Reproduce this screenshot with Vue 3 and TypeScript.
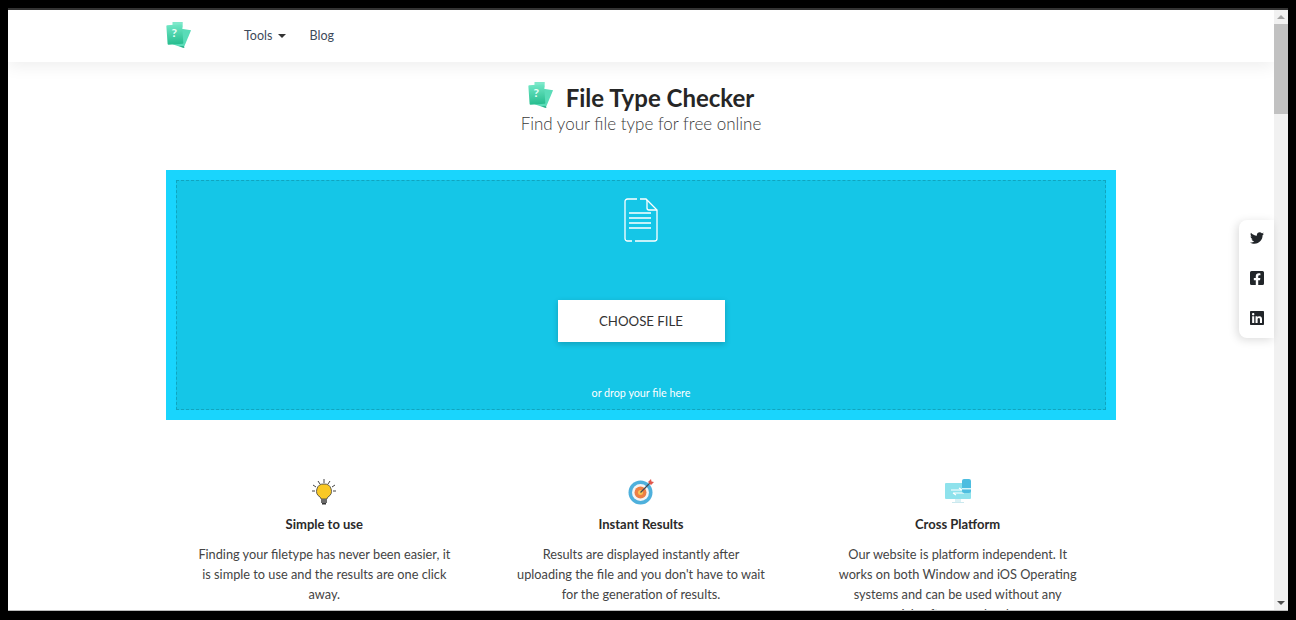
<script setup lang="ts">
const features = [
  {
    title: 'Simple to use',
    icon: 'bulb',
    text: 'Finding your filetype has never been easier, it is simple to use and the results are one click away.',
  },
  {
    title: 'Instant Results',
    icon: 'target',
    text: "Results are displayed instantly after uploading the file and you don't have to wait for the generation of results.",
  },
  {
    title: 'Cross Platform',
    icon: 'screen',
    text: 'Our website is platform independent. It works on both Window and iOS Operating systems and can be used without any special software or hardware.',
  },
]
</script>

<template>
  <div class="frame">
    <div class="viewport">
      <div class="page">
        <header class="navbar">
          <div class="container nav-inner">
            <svg class="logo" viewBox="0 0 26 28">
              <defs>
                <linearGradient id="cardGrad" x1="0" y1="0" x2="0" y2="1">
                  <stop offset="0" stop-color="#6fe6c4" />
                  <stop offset="1" stop-color="#27bd8f" />
                </linearGradient>
              </defs>
              <path d="M14 7 L26 9 L18 28 L6 24 Z" fill="#5adcb8" />
              <path d="M18 26 L19 28 L13 26 Z" fill="#24a57f" />
              <rect x="6" y="0" width="11" height="6" fill="#7fe8ca" />
              <rect x="0" y="3" width="17" height="21" rx="1" fill="url(#cardGrad)" transform="rotate(-4 8 13)" />
              <text x="5" y="16" class="logo-mark">?</text>
            </svg>
            <a class="nav-link tools">Tools <span class="caret" /></a>
            <a class="nav-link">Blog</a>
          </div>
        </header>

        <main class="container">
          <div class="title-row">
            <svg class="logo title-logo" viewBox="0 0 26 28">
              <path d="M14 7 L26 9 L18 28 L6 24 Z" fill="#5adcb8" />
              <path d="M18 26 L19 28 L13 26 Z" fill="#24a57f" />
              <rect x="6" y="0" width="11" height="6" fill="#7fe8ca" />
              <rect x="0" y="3" width="17" height="21" rx="1" fill="url(#cardGrad)" transform="rotate(-4 8 13)" />
              <text x="5" y="16" class="logo-mark">?</text>
            </svg>
            <h1>File Type Checker</h1>
          </div>
          <p class="subtitle">Find your file type for free online</p>

          <section class="dropzone">
            <div class="dropzone-inner">
              <svg class="file-icon" viewBox="0 0 34 44" fill="none" stroke="#fff" stroke-width="1.3">
                <path d="M13 1H3.500A2.500 2.500 0 0 0 1 3.500V40.500A2.500 2.500 0 0 0 3.500 43H8M11 43H30.500A2.500 2.500 0 0 0 33 40.500V12L22 1H16" />
                <path d="M23 2V10A2 2 0 0 0 25 12H33" />
                <path d="M5 15H27M5 20H27M5 25H27M5 30H27" />
              </svg>
              <button class="choose-btn">CHOOSE FILE</button>
              <span class="drop-hint">or drop your file here</span>
            </div>
          </section>

          <section class="features">
            <article v-for="f in features" :key="f.title" class="feature">
              <svg v-if="f.icon === 'bulb'" class="feature-icon" viewBox="0 0 26 26">
                <path d="M2 6l3 2M7 2l2 3M13 0v4M19 2l-2 3M24 6l-3 2M1 12h3M25 12h-3" stroke="#444" stroke-width="1" fill="none" />
                <path d="M13 5a7 7 0 0 0-4 13c.700.600 1 1.300 1 2h6c0-.700.300-1.400 1-2a7 7 0 0 0-4-13z" fill="#f9c825" stroke="#3d3d3d" stroke-width=".8" />
                <rect x="10" y="20" width="6" height="4" fill="#6b6b6b" />
                <rect x="11" y="24" width="4" height="1.500" fill="#333" />
              </svg>
              <svg v-else-if="f.icon === 'target'" class="feature-icon" viewBox="0 0 26 26">
                <circle cx="12.500" cy="13.500" r="12" fill="#4eb0dc" />
                <circle cx="12.500" cy="13.500" r="8.500" fill="#f4f4f4" />
                <circle cx="12.500" cy="13.500" r="6" fill="#ec7f45" />
                <circle cx="12.500" cy="13.500" r="2.500" fill="#f7c453" />
                <path d="M12.500 13.500L22 4" stroke="#3f4a55" stroke-width="1.200" />
                <path d="M20 3l3-3 .5 2.500L26 3l-3 3z" fill="#e2574c" />
              </svg>
              <svg v-else class="feature-icon" viewBox="0 0 26 26">
                <rect x="0" y="4" width="26" height="16" rx="1" fill="#8ee2ec" />
                <path d="M6 11h11M14 9l3 2M19 14H8M11 16l-3-2" stroke="#fff" stroke-width="1.100" fill="none" />
                <rect x="17" y="0" width="9" height="14" rx="2" fill="#4dbde0" />
                <rect x="17" y="9" width="9" height="1.500" fill="#d6f4f8" />
                <rect x="10" y="20" width="6" height="3" fill="#d9f1f5" />
                <rect x="7" y="23" width="12" height="1" fill="#cbe8ee" />
              </svg>
              <h2>{{ f.title }}</h2>
              <p>{{ f.text }}</p>
            </article>
          </section>
        </main>
      </div>

      <aside class="social">
        <svg viewBox="0 0 512 512"><path d="M459.37 151.716c.325 4.548.325 9.097.325 13.645 0 138.72-105.583 298.558-298.558 298.558-59.452 0-114.68-17.219-161.137-47.106 8.447.974 16.568 1.299 25.34 1.299 49.055 0 94.213-16.568 130.274-44.832-46.132-.975-84.792-31.188-98.112-72.772 6.498.974 12.995 1.624 19.818 1.624 9.421 0 18.843-1.3 27.614-3.573-48.081-9.747-84.143-51.98-84.143-102.985v-1.299c13.969 7.797 30.214 12.67 47.431 13.319-28.264-18.843-46.781-51.005-46.781-87.391 0-19.492 5.197-37.36 14.294-52.954 51.655 63.675 129.3 105.258 216.365 109.807-1.624-7.797-2.599-15.918-2.599-24.04 0-57.828 46.782-104.934 104.934-104.934 30.213 0 57.502 12.67 76.67 33.137 23.715-4.548 46.456-13.32 66.599-25.34-7.798 24.366-24.366 44.833-46.132 57.827 21.117-2.273 41.584-8.122 60.426-16.243-14.292 20.791-32.161 39.308-52.628 54.253z" /></svg>
        <svg viewBox="0 0 448 512"><path d="M400 32H48A48 48 0 0 0 0 80v352a48 48 0 0 0 48 48h137.25V327.69h-63V256h63v-54.64c0-62.15 37-96.48 93.67-96.48 27.14 0 55.52 4.84 55.52 4.84v61h-31.27c-30.81 0-40.42 19.12-40.42 38.73V256h68.78l-11 71.69h-57.78V480H400a48 48 0 0 0 48-48V80a48 48 0 0 0-48-48z" /></svg>
        <svg viewBox="0 0 448 512"><path d="M416 32H31.900C14.300 32 0 46.500 0 64.300v383.400C0 465.500 14.300 480 31.900 480H416c17.600 0 32-14.500 32-32.300V64.300c0-17.800-14.400-32.300-32-32.300zM135.400 416H69V202.200h66.500V416zm-33.200-243c-21.300 0-38.500-17.300-38.500-38.500S80.900 96 102.200 96c21.200 0 38.500 17.300 38.500 38.500 0 21.300-17.200 38.500-38.500 38.500zm282.100 243h-66.400V312c0-24.800-.5-56.700-34.500-56.700-34.600 0-39.900 27-39.900 54.900V416h-66.400V202.200h63.700v29.200h.9c8.900-16.800 30.600-34.500 62.900-34.500 67.200 0 79.700 44.300 79.700 101.900V416z" /></svg>
      </aside>

      <div class="scrollbar">
        <span class="arrow up" />
        <div class="track"><div class="thumb" /></div>
        <span class="arrow down" />
      </div>
    </div>
  </div>
</template>

<style>
html, body {
  margin: 0;
  background: #000;
  overflow: hidden;
}
</style>

<style scoped>
.frame {
  width: 1296px;
  height: 620px;
  background: #000;
  padding: 8px 8px 9px;
  box-sizing: border-box;
  font-family: "Lato", "Noto Sans", sans-serif;
  color: #333;
}

.viewport {
  position: relative;
  height: 100%;
  display: flex;
  overflow: hidden;
  background: #fff;
  border-top: 2px solid #333;
  border-bottom: 1px solid #bbb;
  box-sizing: border-box;
}

.page {
  flex: 1;
  min-width: 0;
}

.container {
  width: 950px;
  margin-left: 158px;
}

.navbar {
  height: 52px;
  background: #fff;
  box-shadow: 0 4px 16px rgba(0, 0, 0, 0.07);
}

.nav-inner {
  height: 100%;
  display: flex;
  align-items: center;
  font-size: 12.5px;
  padding-bottom: 2px;
  box-sizing: border-box;
}

.logo {
  width: 26px;
  height: 26px;
  flex: none;
}

.logo-mark {
  font-family: "Lato", sans-serif;
  font-size: 13px;
  font-weight: 700;
  fill: #eafff8;
}

.nav-link {
  color: #3d4a5a;
}

.tools {
  margin-left: 52px;
  margin-right: 24px;
}

.caret {
  display: inline-block;
  margin-left: 2px;
  vertical-align: 2px;
  border-top: 4px solid #333;
  border-left: 4px solid transparent;
  border-right: 4px solid transparent;
}

.title-row {
  display: flex;
  align-items: center;
  justify-content: center;
  gap: 12px;
  margin-top: 20px;
  height: 30px;
}

.title-logo {
  margin-top: -5px;
}

h1 {
  margin: 0;
  font-size: 24px;
  font-weight: 700;
  color: #262626;
}

.subtitle {
  margin: 0;
  text-align: center;
  font-size: 17px;
  font-weight: 300;
  line-height: 24px;
  color: #3a3a3a;
}

.dropzone {
  margin-top: 34px;
  height: 250px;
  padding: 10px;
  box-sizing: border-box;
  background: #19d5fd;
}

.dropzone-inner {
  height: 100%;
  box-sizing: border-box;
  border: 1px dashed #10a5bf;
  background: #15c6e7;
  display: flex;
  flex-direction: column;
  align-items: center;
}

.file-icon {
  width: 34px;
  height: 44px;
  margin-top: 17px;
}

.choose-btn {
  margin-top: 58px;
  width: 167px;
  height: 42px;
  border: none;
  background: #fff;
  color: #333;
  font-family: inherit;
  font-size: 13.25px;
  box-shadow: 0 2px 6px rgba(0, 0, 0, 0.2);
}

.drop-hint {
  margin-top: 44px;
  font-size: 10.75px;
  color: #fff;
}

.features {
  display: grid;
  grid-template-columns: repeat(3, 1fr);
  margin-top: 59px;
}

.feature {
  text-align: center;
  padding: 0 33px;
}

.feature:first-child {
  padding: 0 30px;
}

.feature:last-child {
  padding: 0 36px;
}

.feature-icon {
  display: block;
  width: 26px;
  height: 26px;
  margin: 0 auto;
}

h2 {
  margin: 10px 0 11px;
  font-size: 13px;
  font-weight: 700;
  line-height: 18px;
  color: #2a2a2a;
}

.feature p {
  margin: 0;
  font-size: 12.75px;
  line-height: 20px;
  color: #444;
}

.social {
  position: absolute;
  top: 210px;
  right: 14px;
  width: 35px;
  height: 118px;
  background: #fff;
  border-radius: 8px 0 0 8px;
  box-shadow: -2px 2px 10px rgba(0, 0, 0, 0.14);
  display: flex;
  flex-direction: column;
  align-items: center;
  gap: 24px;
  padding-top: 10px;
  box-sizing: border-box;
}

.social svg {
  width: 14px;
  height: 16px;
  fill: #212529;
}

.scrollbar {
  width: 14px;
  flex: none;
  background: #f1f1f1;
  display: flex;
  flex-direction: column;
  align-items: center;
}

.track {
  flex: 1;
  width: 100%;
}

.thumb {
  height: 90px;
  background: #c1c1c1;
}

.arrow {
  flex: none;
  width: 0;
  height: 0;
  margin: 5px 0;
  border-left: 4px solid transparent;
  border-right: 4px solid transparent;
}

.arrow.up {
  border-bottom: 4px solid #a3a3a3;
}

.arrow.down {
  border-top: 4px solid #505050;
}
</style>
